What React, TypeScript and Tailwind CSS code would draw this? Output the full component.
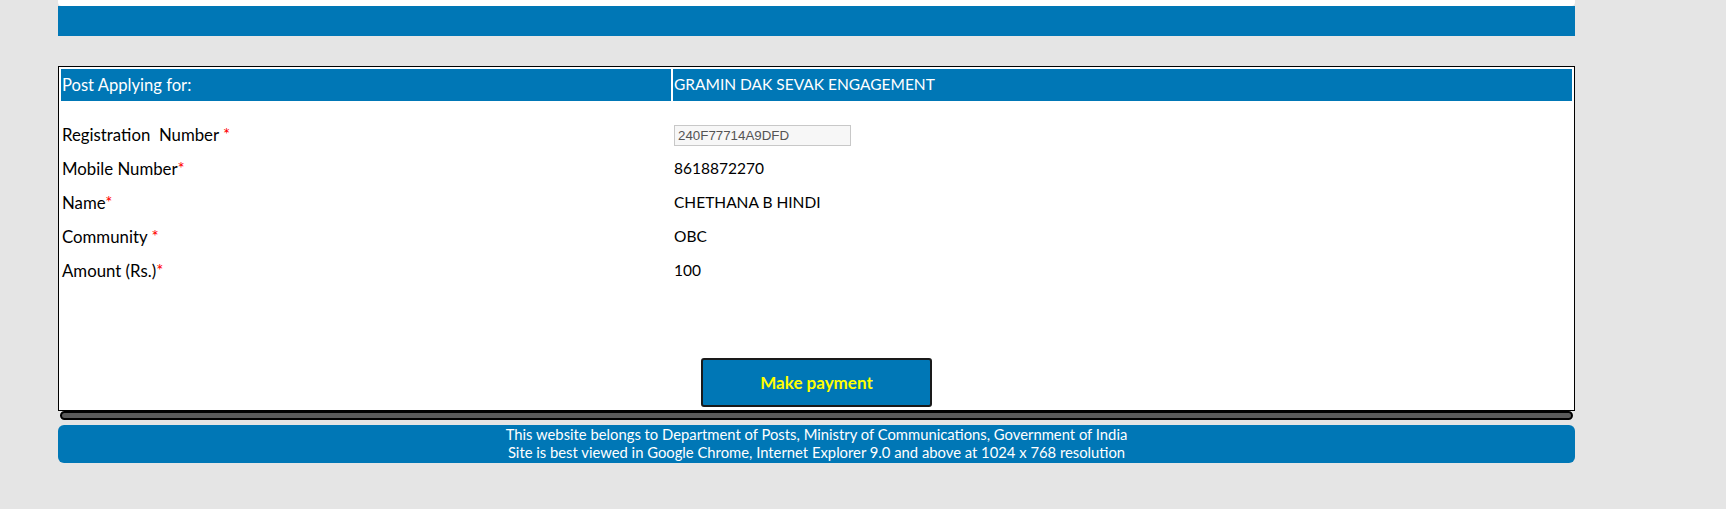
import React from "react";

const blue = "bg-[#0077b6]";

function Req() {
  return <span className="text-[#ff0000]">*</span>;
}

function Row({ label, children }: { label: React.ReactNode; children: React.ReactNode }) {
  return (
    <div className="flex gap-[2px] h-[34px] items-center text-black">
      <div className="w-[610px] pl-[1px] text-[16.8px]">{label}</div>
      <div className="flex-1 pl-[1px] text-[15.5px]">{children}</div>
    </div>
  );
}

function App() {
  return (
    <div className="min-h-screen bg-[#e5e5e5] font-['Lato','Open_Sans',sans-serif]">
      <div className="ml-[58px] w-[1517px]">
        <div className="h-[6px] bg-white rounded-b-[4px] overflow-hidden flex justify-end pr-[6px]">
          <span className="-mt-[9px] text-[10px] leading-none text-gray-400 font-['Liberation_Sans',sans-serif]">
            ver 1.0.1
          </span>
        </div>
        <div className={`h-[30px] ${blue}`} />

        <div className="mt-[30px] border border-black bg-white p-[2px]">
          <div className="flex gap-[2px] h-[32px] text-white">
            <div className={`w-[610px] ${blue} flex items-center pl-[1px] text-[16.6px]`}>Post Applying for:</div>
            <div className={`flex-1 ${blue} flex items-center pl-[1px] text-[15.5px]`}>
              GRAMIN DAK SEVAK ENGAGEMENT
            </div>
          </div>

          <div className="mt-[17px]">
            <Row
              label={
                <>
                  Registration&nbsp; Number <Req />
                </>
              }
            >
              <input
                readOnly
                value="240F77714A9DFD"
                className="w-[177px] h-[21px] border border-[#c8c8c8] bg-[#f7f7f7] px-[3px] text-[13.33px] text-[#545454] font-['Liberation_Sans',Arial,sans-serif] outline-none"
              />
            </Row>
            <Row
              label={
                <>
                  Mobile Number<Req />
                </>
              }
            >
              8618872270
            </Row>
            <Row
              label={
                <>
                  Name<Req />
                </>
              }
            >
              CHETHANA B HINDI
            </Row>
            <Row
              label={
                <>
                  Community <Req />
                </>
              }
            >
              OBC
            </Row>
            <Row
              label={
                <>
                  Amount (Rs.)<Req />
                </>
              }
            >
              100
            </Row>
          </div>

          <div className="mt-[70px] mb-[1px] flex justify-center">
            <button
              className={`w-[231px] h-[49px] ${blue} border-2 border-[#1a1a1a] rounded-[3px] text-[#ffff00] font-bold text-[17px]`}
            >
              Make payment
            </button>
          </div>
        </div>

        <div className="mx-[2px] h-[9px] border-2 border-black rounded-full bg-[#5a5a5a]" />

        <div
          className={`mt-[5px] h-[38px] rounded-[6px] ${blue} text-white text-center text-[14.8px] leading-[17.5px] pt-[1px]`}
        >
          <div>This website belongs to Department of Posts, Ministry of Communications, Government of India</div>
          <div>Site is best viewed in Google Chrome, Internet Explorer 9.0 and above at 1024 x 768 resolution</div>
        </div>
      </div>
    </div>
  );
}

export default App;
